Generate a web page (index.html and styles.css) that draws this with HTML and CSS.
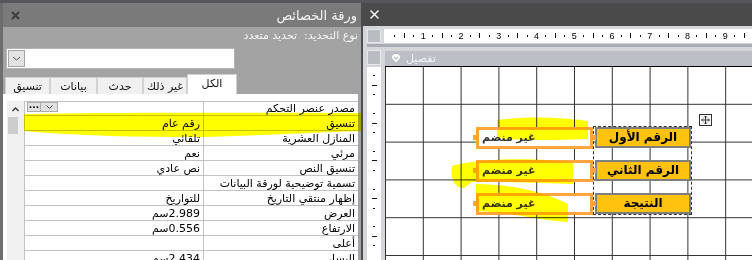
FILE: index.html
```html
<!DOCTYPE html>
<html lang="ar">

<head>
    <meta charset="UTF-8">
    <title>ورقة الخصائص</title>
    <link rel="stylesheet" href="styles.css">
</head>

<body>
    <div class="topband"></div>

    <div class="app">
        <!-- property sheet -->
        <aside class="props">
            <div class="props-title">
                <svg class="props-close" width="9" height="9" viewBox="0 0 9 9">
                    <path d="M1 1 L8 8 M8 1 L1 8" stroke="#3c3c3c" stroke-width="2" />
                </svg>
                <span class="props-caption">ورقة الخصائص</span>
            </div>

            <div class="seltype" dir="rtl">نوع التحديد:&nbsp; تحديد متعدد</div>

            <div class="combo">
                <span class="combo-btn">
                    <svg width="9" height="5" viewBox="0 0 9 5">
                        <path d="M1 1 L4.5 4 L8 1" fill="none" stroke="#555" stroke-width="1" />
                    </svg>
                </span>
            </div>

            <div class="tabs">
                <span class="tab tab-w45">تنسيق</span>
                <span class="tab tab-w47">بيانات</span>
                <span class="tab tab-w46">حدث</span>
                <span class="tab tab-w44">غير ذلك</span>
                <span class="tab tab-active">الكل</span>
            </div>

            <div class="sheet">
                <div class="vscroll">
                    <svg class="vscroll-up" width="7" height="5" viewBox="0 0 7 5">
                        <path d="M0.5 4 L3.5 1 L6.5 4" fill="none" stroke="#333" stroke-width="1.3" />
                    </svg>
                    <span class="vscroll-thumb"></span>
                </div>

                <table class="prop-grid" dir="rtl">
                    <colgroup>
                        <col class="col-label">
                        <col class="col-value">
                    </colgroup>
                    <tr class="row-first">
                        <td>مصدر عنصر التحكم</td>
                        <td class="cell-btns">
                            <span class="mini-btn mini-dots">&middot;&middot;&middot;</span><span class="mini-btn mini-drop">
                                <svg width="7" height="4" viewBox="0 0 7 4">
                                    <path d="M0.5 0.5 L3.5 3.5 L6.5 0.5" fill="none" stroke="#444" stroke-width="1" />
                                </svg>
                            </span>
                        </td>
                    </tr>
                    <tr>
                        <td>تنسيق</td>
                        <td>رقم عام</td>
                    </tr>
                    <tr>
                        <td>المنازل العشرية</td>
                        <td>تلقائي</td>
                    </tr>
                    <tr>
                        <td>مرئي</td>
                        <td>نعم</td>
                    </tr>
                    <tr>
                        <td>تنسيق النص</td>
                        <td>نص عادي</td>
                    </tr>
                    <tr>
                        <td>تسمية توضيحية لورقة البيانات</td>
                        <td></td>
                    </tr>
                    <tr>
                        <td>إظهار منتقي التاريخ</td>
                        <td>للتواريخ</td>
                    </tr>
                    <tr>
                        <td>العرض</td>
                        <td>2.989سم</td>
                    </tr>
                    <tr>
                        <td>الارتفاع</td>
                        <td>0.556سم</td>
                    </tr>
                    <tr>
                        <td>أعلى</td>
                        <td></td>
                    </tr>
                    <tr>
                        <td>اليسار</td>
                        <td>2.434سم</td>
                    </tr>
                </table>
            </div>
        </aside>

        <!-- form design view -->
        <main class="design">
            <div class="design-title">
                <svg width="9" height="9" viewBox="0 0 9 9">
                    <path d="M0.5 0.5 L8.5 8.5 M8.5 0.5 L0.5 8.5" stroke="#fff" stroke-width="1.4" />
                </svg>
            </div>

            <div class="design-frame">
                <div class="ruler-row">
                    <span class="corner"></span>
                    <div class="hruler">
                        <span class="seg"><i class="d"></i><i class="b"></i><i class="d"></i><i class="n">1</i></span>
                        <span class="seg"><i class="d"></i><i class="b"></i><i class="d"></i><i class="n">2</i></span>
                        <span class="seg"><i class="d"></i><i class="b"></i><i class="d"></i><i class="n">3</i></span>
                        <span class="seg"><i class="d"></i><i class="b"></i><i class="d"></i><i class="n">4</i></span>
                        <span class="seg"><i class="d"></i><i class="b"></i><i class="d"></i><i class="n">5</i></span>
                        <span class="seg"><i class="d"></i><i class="b"></i><i class="d"></i><i class="n">6</i></span>
                        <span class="seg"><i class="d"></i><i class="b"></i><i class="d"></i><i class="n">7</i></span>
                        <span class="seg"><i class="d"></i><i class="b"></i><i class="d"></i><i class="n">8</i></span>
                        <span class="seg"><i class="d"></i><i class="b"></i><i class="d"></i><i class="n">9</i></span>
                        <span class="seg"><i class="d"></i><i class="b"></i><i class="d"></i><i class="n"></i></span>
                    </div>
                </div>

                <div class="section-row">
                    <span class="corner"></span>
                    <div class="section-bar">
                        <svg width="10" height="10" viewBox="0 0 10 10">
                            <path d="M1 5 A4 4 0 1 1 9 5 L5 9.5 Z" fill="#fff" />
                            <path d="M3 4 L5 6 L7 4" fill="none" stroke="#b9bcc3" stroke-width="1.2" />
                        </svg>
                        <span class="section-name">تفصيل</span>
                    </div>
                </div>

                <div class="canvas-row">
                    <div class="vruler">
                        <span class="vseg"><i class="d"></i><i class="b"></i><i class="d"></i><i class="n"></i></span>
                        <span class="vseg"><i class="d"></i><i class="b"></i><i class="d"></i><i class="n"></i></span>
                        <span class="vseg"><i class="d"></i><i class="b"></i><i class="d"></i><i class="n"></i></span>
                        <span class="vseg"><i class="d"></i><i class="b"></i><i class="d"></i><i class="n"></i></span>
                        <span class="vseg"><i class="d"></i><i class="b"></i><i class="d"></i><i class="n"></i></span>
                    </div>

                    <div class="canvas">
                        <span class="move-handle">
                            <svg width="13" height="12" viewBox="0 0 13 12">
                                <rect x="0.5" y="0.5" width="12" height="11" fill="#fff" stroke="#333" />
                                <path d="M6.5 2 V10 M2.5 6 H10.5" stroke="#333" stroke-width="1" />
                                <path d="M5 3.5 L6.5 2 L8 3.5 M5 8.5 L6.5 10 L8 8.5 M4 4.5 L2.5 6 L4 7.5 M9 4.5 L10.5 6 L9 7.5" fill="none" stroke="#333" stroke-width="1" />
                            </svg>
                        </span>

                        <div class="group-box"></div>

                        <div class="ctl ctl-r1">
                            <span class="textbox">غير منضم</span>
                            <span class="label">الرقم الأول</span>
                        </div>
                        <div class="ctl ctl-r2">
                            <span class="textbox">غير منضم</span>
                            <span class="label">الرقم الثاني</span>
                        </div>
                        <div class="ctl ctl-r3">
                            <span class="textbox">غير منضم</span>
                            <span class="label">النتيجة</span>
                        </div>
                    </div>
                </div>
            </div>
        </main>
    </div>

    <!-- highlighter marks drawn over the screenshot -->
    <svg class="marker" width="752" height="260" viewBox="0 0 752 260">
        <path d="M24 114 C120 112 250 113 361 113 L361 131 C300 133 250 136 200 137 C140 137 80 136 24 131 Z" />
        <path d="M497 120 C530 116 560 117 588 121 L588 139 C560 140 525 141 497 138 Z" />
        <path d="M452 166 C480 158 540 157 573 163 L573 184 C540 183 500 181 472 182 L464 188 C455 188 450 180 452 166 Z" />
        <path d="M476 184 C510 184 545 192 568 204 L568 222 C545 221 520 214 492 212 L476 211 Z" />
    </svg>
</body>

</html>
```

FILE: styles.css
```css
* {
    box-sizing: border-box;
}

body {
    margin: 0;
    width: 752px;
    height: 260px;
    overflow: hidden;
    position: relative;
    background-color: #58555e;
    font-family: "DejaVu Sans", "Noto Sans", sans-serif;
}

.topband {
    height: 3px;
}

.app {
    display: flex;
    height: 257px;
}

/* ---------- property sheet ---------- */

.props {
    width: 361px;
    flex-shrink: 0;
    display: flex;
    flex-direction: column;
    background-color: #a3a3a3;
    border-left: 3px solid #6d6d6d;
}

.props-title {
    height: 24px;
    display: flex;
    align-items: center;
    justify-content: space-between;
    padding: 0 4px 0 8px;
    background-color: #7a7a7a;
}

.props-caption {
    color: #f4f4f4;
    font-size: 13px;
}

.seltype {
    height: 17px;
    padding-right: 3px;
    color: #f4f4f4;
    font-size: 11px;
    line-height: 17px;
}

.combo {
    width: 229px;
    height: 21px;
    margin: 4px 0 0 3px;
    padding: 1px;
    background-color: #fff;
    border: 1px solid #b4b4b4;
}

.combo-btn {
    display: flex;
    align-items: center;
    justify-content: center;
    width: 17px;
    height: 17px;
    background-color: #e3e3e3;
    border: 1px solid #a5a5a5;
}

.tabs {
    display: flex;
    align-items: flex-end;
    height: 20px;
    margin: 5px 0 0 2px;
}

.tab {
    height: 17px;
    display: flex;
    align-items: center;
    justify-content: center;
    background-color: #f0f0f0;
    border: 1px solid #d2d2d2;
    border-bottom: none;
    font-size: 11px;
    color: #111;
}

.tab-w45 { width: 45px; }
.tab-w47 { width: 47px; }
.tab-w46 { width: 46px; }
.tab-w44 { width: 44px; }

.tab-active {
    width: 50px;
    height: 20px;
    background-color: #fff;
    border-color: #d0d0d0;
    padding-bottom: 2px;
}

.sheet {
    flex: 1;
    display: flex;
    align-items: flex-start;
    margin-right: 3px;
    padding: 7px 0 0 4px;
    background-color: #fff;
    overflow: hidden;
}

.vscroll {
    width: 17px;
    height: 160px;
    flex-shrink: 0;
    position: relative;
    background-color: #f0f0f0;
}

.vscroll-up {
    display: block;
    margin: 6px 0 0 5px;
}

.vscroll-thumb {
    display: block;
    width: 10px;
    height: 17px;
    margin: 5px 0 0 1px;
    background-color: #cdcdcd;
}

.prop-grid {
    width: 334px;
    border-collapse: collapse;
    table-layout: fixed;
    font-size: 11px;
    color: #000;
}

.col-label { width: 155px; }
.col-value { width: 179px; }

.prop-grid td {
    height: 15px;
    padding: 0 3px;
    border: 1px solid #c2c2c2;
    white-space: nowrap;
    overflow: hidden;
    line-height: 13px;
    vertical-align: bottom;
}

.prop-grid tr:first-child td {
    height: 14px;
}

.prop-grid td.cell-btns {
    direction: ltr;
    text-align: left;
    padding: 0 0 0 2px;
    vertical-align: middle;
}

.mini-btn {
    display: inline-flex;
    align-items: center;
    justify-content: center;
    height: 10px;
    background-color: #e1e1e1;
    border: 1px solid #adadad;
    vertical-align: top;
    font-size: 9px;
    font-weight: bold;
    line-height: 8px;
}

.mini-dots { width: 14px; }
.mini-drop { width: 17px; border-left: none; }

/* ---------- design view ---------- */

.design {
    flex: 1;
    display: flex;
    flex-direction: column;
}

.design-title {
    height: 23px;
    display: flex;
    align-items: center;
    padding-left: 9px;
    background-color: #4a4a4a;
}

.design-frame {
    flex: 1;
    display: flex;
    flex-direction: column;
    background-color: #d4d6da;
    border-left: 2px solid #4e4e4e;
    padding: 3px 0 0 4px;
}

.corner {
    width: 14px;
    flex-shrink: 0;
    background-color: #b9bcc3;
    border: 1px solid #e6e7ea;
}

.ruler-row {
    display: flex;
    height: 14px;
}

.ruler-row .corner {
    margin-right: 3px;
}

.hruler {
    flex: 1;
    display: flex;
    padding-left: 6.2px;
    background-color: #fff;
    overflow: hidden;
}

.seg {
    display: flex;
    flex-shrink: 0;
}

.seg i,
.vseg i {
    display: flex;
    align-items: center;
    justify-content: center;
    flex-shrink: 0;
    font-style: normal;
}

.seg i {
    width: 9.45px;
    height: 14px;
}

.seg .d::after {
    content: "";
    width: 1px;
    height: 2px;
    background-color: #111;
}

.seg .b::after {
    content: "";
    width: 1px;
    height: 5px;
    background-color: #111;
}

.seg .n {
    font-family: "Liberation Sans", sans-serif;
    font-size: 9px;
    color: #000;
}

.section-row {
    display: flex;
    height: 23px;
    margin-top: 1px;
    padding-top: 3px;
    border-top: 3px solid #a9acb2;
}

.section-row .corner {
    height: 15px;
    margin-right: 4px;
}

.section-bar {
    flex: 1;
    display: flex;
    align-items: center;
    gap: 5px;
    padding-left: 6px;
    background-color: #bcbfc6;
    border-top: 1px solid #d2d4d9;
    border-bottom: 1px solid #000;
}

.section-name {
    color: #f2f4fa;
    font-size: 11px;
}

.canvas-row {
    flex: 1;
    display: flex;
}

.vruler {
    width: 14px;
    flex-shrink: 0;
    display: flex;
    flex-direction: column;
    padding-top: 4.725px;
    margin-right: 4px;
    background-color: #fff;
    overflow: hidden;
}

.vseg {
    display: flex;
    flex-direction: column;
    flex-shrink: 0;
}

.vseg i {
    width: 14px;
    height: 9.45px;
}

.vseg .d::after {
    content: "";
    width: 2px;
    height: 1px;
    background-color: #111;
}

.vseg .b::after {
    content: "";
    width: 5px;
    height: 1px;
    background-color: #111;
}

.canvas {
    flex: 1;
    position: relative;
    border-left: 1px solid #333;
    background-color: #fff;
    background-image:
        linear-gradient(to right, transparent calc(100% - 1px), #333 calc(100% - 1px)),
        linear-gradient(to bottom, transparent calc(100% - 1px), #333 calc(100% - 1px));
    background-size: 37.8px 37.8px;
}

.move-handle {
    position: absolute;
    left: 313px;
    top: 47px;
    line-height: 0;
}

.group-box {
    position: absolute;
    left: 207px;
    top: 59px;
    width: 99px;
    height: 89px;
    border: 1px dashed #333;
}

.ctl {
    position: absolute;
    left: 90px;
    display: flex;
    gap: 2px;
}

.ctl-r1 { top: 60px; }
.ctl-r2 { top: 93px; }
.ctl-r3 { top: 126px; }

.textbox {
    position: relative;
    width: 117px;
    height: 22px;
    padding: 0 3px;
    border: 3px solid #ffa53c;
    background-color: #fff;
    font-size: 11px;
    font-weight: bold;
    line-height: 15px;
    color: #333;
}

.textbox::before,
.textbox::after {
    content: "";
    position: absolute;
    top: 5px;
    width: 4px;
    height: 5px;
    background-color: #ffa53c;
}

.textbox::before { left: -6px; }
.textbox::after { right: -6px; }

.label {
    width: 96px;
    height: 21px;
    display: flex;
    align-items: center;
    justify-content: center;
    background-color: #ffc20f;
    border: 2px solid #7e7e7e;
    font-size: 12px;
    font-weight: bold;
    color: #000;
}

/* ---------- highlighter overlay ---------- */

.marker {
    position: absolute;
    left: 0;
    top: 0;
    pointer-events: none;
    mix-blend-mode: multiply;
    fill: #ffff00;
}
```
